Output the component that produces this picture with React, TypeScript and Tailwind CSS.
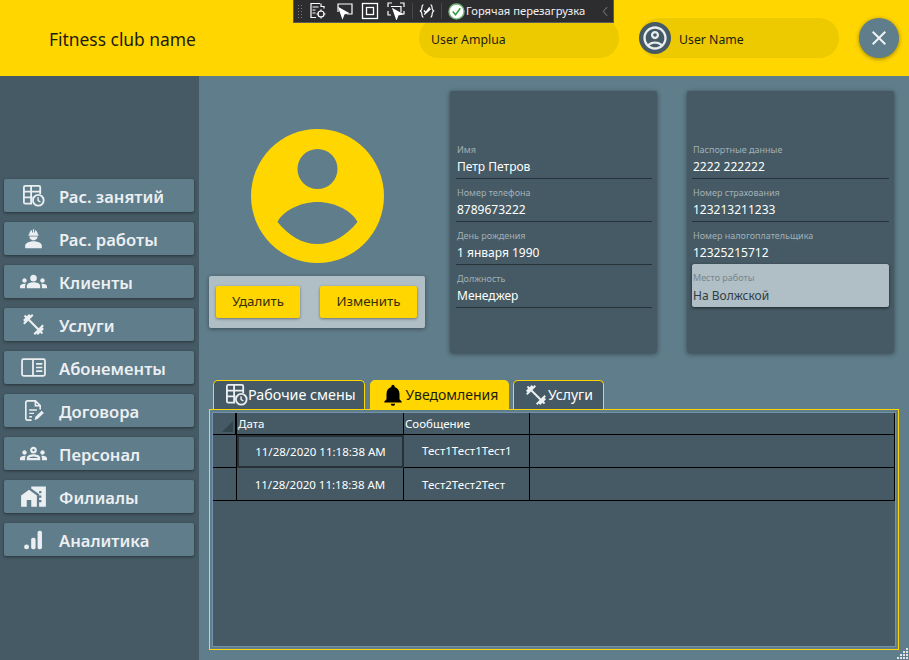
import React from "react";
import {
  MdGroups, MdFitnessCenter, MdOutlineGroups, MdMapsHomeWork,
  MdNotifications, MdOutlineAccountCircle, MdClose,
} from "react-icons/md";

const TableClock = ({ className = "" }: { className?: string }) => (
  <svg viewBox="0 0 24 24" className={className} fill="none" stroke="currentColor" strokeWidth="1.900">
    <path d="M10.500 20.500H3.500A1.500 1.500 0 0 1 2 19V3.500A1.500 1.500 0 0 1 3.500 2h14A1.500 1.500 0 0 1 19 3.500V10.500" />
    <path d="M2 8h17M2 14h9M9.500 2v18.500" />
    <circle cx="17" cy="17" r="5.600" />
    <path d="M16.800 13.800v3.500l2.400 1.300" strokeWidth="1.500" />
  </svg>
);

const HatPerson = ({ className = "" }: { className?: string }) => (
  <svg viewBox="0 0 24 24" className={className} fill="currentColor">
    <path d="M2.500 23v-3C2.500 17 8 15.200 12 15.200S21.500 17 21.500 20v3z" />
    <path d="M7.300 9.800c.1 2.900 2.200 4.400 4.700 4.400s4.600-1.500 4.700-4.400z" />
    <path d="M6.300 8.800V7.300h.8C7.300 4.600 8.700 2.900 10.300 2.300V5h1V1.500h1.400V5h1V2.300c1.600.6 3 2.300 3.200 5h.8v1.500z" />
  </svg>
);

const BookIcon = ({ className = "" }: { className?: string }) => (
  <svg viewBox="0 0 24 24" className={className} fill="none" stroke="currentColor" strokeWidth="1.700">
    <rect x="1" y="4" width="22" height="16" rx="1.500" />
    <path d="M11.500 4v16" />
    <path d="M14.500 8.500h6M14.500 12h6M14.500 15.500h6" strokeWidth="1.500" />
  </svg>
);

const ContractIcon = ({ className = "" }: { className?: string }) => (
  <svg viewBox="0 0 24 24" className={className} fill="none" stroke="currentColor" strokeWidth="1.700">
    <path d="M10 22H6a2 2 0 0 1-2-2V4a2 2 0 0 1 2-2h8l5 5v4" />
    <path d="M14 2v5h5" />
    <path d="M7.500 11.500h8M7.500 15h5M7.500 18.500h3" strokeWidth="1.500" />
    <path d="M13 22l1-3.500 6.500-6.200 2.300 2.300-6.500 6.300z" fill="currentColor" stroke="none" />
  </svg>
);

const BarsIcon = ({ className = "" }: { className?: string }) => (
  <svg viewBox="0 0 24 24" className={className} fill="currentColor">
    <circle cx="5" cy="19.500" r="2.700" />
    <rect x="10" y="9.500" width="4.800" height="12.700" rx="2" />
    <rect x="17" y="2" width="4.800" height="20.200" rx="2" />
  </svg>
);

const nav: { label: string; icon: React.ReactNode }[] = [
  { label: "Рас. занятий", icon: <TableClock className="w-[23px] h-[23px]" /> },
  { label: "Рас. работы", icon: <HatPerson className="w-[21px] h-[21px]" /> },
  { label: "Клиенты", icon: <MdGroups className="w-[27px] h-[27px]" /> },
  { label: "Услуги", icon: <MdFitnessCenter className="w-[25px] h-[25px]" /> },
  { label: "Абонементы", icon: <BookIcon className="w-[25px] h-[25px]" /> },
  { label: "Договора", icon: <ContractIcon className="w-[23px] h-[23px]" /> },
  { label: "Персонал", icon: <MdOutlineGroups className="w-[27px] h-[27px]" /> },
  { label: "Филиалы", icon: <MdMapsHomeWork className="w-[27px] h-[27px]" /> },
  { label: "Аналитика", icon: <BarsIcon className="w-[22px] h-[22px]" /> },
];

const Field = ({ label, value, active }: { label: string; value: string; active?: boolean }) => (
  <div
    className={
      "h-[43px] flex flex-col justify-end pl-[1px] " +
      (active
        ? "-mt-[1px] bg-[#B0BEC5] rounded-[2px] shadow-[0_1px_3px_rgba(0,0,0,0.6)] text-[#2f3d44]"
        : "border-b border-[#263238] text-white")
    }
  >
    <div className={"text-[9px] leading-[12px] " + (active ? "mb-[4px] text-[#78868d]" : "mb-[3px] text-[#a3b0b6]")}>{label}</div>
    <div className="text-[12px] leading-[16px] mb-[3px]">{value}</div>
  </div>
);

const Card = ({ rows, className }: { rows: { label: string; value: string; active?: boolean }[]; className: string }) => (
  <div className={"w-[207px] h-[262px] bg-[#455A64] rounded-[2px] shadow-[0_1px_5px_rgba(0,0,0,0.45)] pt-[45px] " + className}>
    {rows.map((r) => (
      <Field key={r.label} {...r} />
    ))}
  </div>
);

const Tab = ({ children, active, className }: { children: React.ReactNode; active?: boolean; className: string }) => (
  <div
    className={
      "h-[29px] rounded-t-[5px] border border-b-0 border-[#FFD600] flex items-center pb-[1px] " +
      (active ? "bg-[#FFD600] text-[#1c1c10]" : "bg-[#455A64] text-white") +
      " " + className
    }
  >
    {children}
  </div>
);

const Cell = ({ children, className = "border-r border-b border-black" }: { children?: React.ReactNode; className?: string }) => (
  <div className={"flex items-center text-white text-[11.500px] leading-none " + className}>{children}</div>
);

const Grip = () => (
  <div className="absolute right-[1px] bottom-[1px] grid grid-cols-4 gap-[1px] w-[11px] h-[11px]">
    {[0, 0, 0, 1, 0, 0, 1, 1, 0, 1, 1, 1, 1, 1, 1, 1].map((d, i) => (
      <div key={i} className={"w-[2px] h-[2px] " + (d ? "bg-[#dfe6ea]" : "")} />
    ))}
  </div>
);

const ToolBar = () => (
  <div className="absolute left-[293px] top-0 w-[321px] h-[23px] bg-[#2d2d30] border border-[#5a5a5e] border-t-0 flex items-center text-white z-10">
    <div className="w-[7px] h-[14px] ml-[3px] mr-[5px] bg-[radial-gradient(#777_1px,transparent_1px)] bg-[length:3px_3px]" />
    <svg viewBox="0 0 18 18" className="w-[18px] h-[18px] mr-[8px]" fill="none" stroke="#fff" strokeWidth="1.200">
      <path d="M11 1.500H2v14h5M3.500 5h6M3.500 8h3M3.500 11h3M12 1.500v3h3v2" />
      <circle cx="12" cy="12" r="3" />
      <path d="M12 7.500v2M12 14.500v2M7.500 12h2M14.500 12h2" />
    </svg>
    <svg viewBox="0 0 18 18" className="w-[18px] h-[18px] mr-[8px]" fill="none" stroke="#fff" strokeWidth="1.200">
      <path d="M3 10V2h14v10h-5" />
      <path d="M4 6l9 5-4 1-1.500 4z" fill="#fff" />
    </svg>
    <svg viewBox="0 0 18 18" className="w-[18px] h-[18px] mr-[8px]" fill="none" stroke="#fff" strokeWidth="1.300">
      <rect x="1.500" y="1.500" width="15" height="15" />
      <rect x="5.500" y="5.500" width="7" height="7" />
    </svg>
    <svg viewBox="0 0 18 18" className="w-[18px] h-[18px] mr-[7px]" fill="none" stroke="#fff" strokeWidth="1.200">
      <path d="M1 5V1h4M13 1h4v4M1 9v4h3M17 9v3h-3M4 4.500h10v6" />
      <path d="M6 7l9 5-4 1-1.500 4z" fill="#fff" />
    </svg>
    <div className="w-px h-[16px] bg-[#47474b] mr-[6px]" />
    <svg viewBox="0 0 18 18" className="w-[16px] h-[16px] mr-[6px]" fill="none" stroke="#fff" strokeWidth="1.300">
      <path d="M5 2C3 2 3.500 5 3 7c-.3 1-1.500 2-1.500 2S2.700 10 3 11c.5 2 0 5 2 5M13 2c2 0 1.500 3 2 5 .3 1 1.500 2 1.500 2s-1.200 1-1.500 2c-.5 2 0 5-2 5" />
      <path d="M6 13L12 5M5.500 8.500l2.500 2.500 5-4.500" strokeWidth="1.500" />
    </svg>
    <div className="w-px h-[16px] bg-[#47474b] mr-[6px]" />
    <svg viewBox="0 0 18 18" className="w-[17px] h-[17px] mr-[1px]" fill="none">
      <circle cx="9" cy="9" r="8" fill="#fff" stroke="#7cb87c" strokeWidth="1.500" />
      <path d="M5 9l3 3.500L13 5.500" stroke="#2f9e44" strokeWidth="1.600" />
    </svg>
    <span className="text-[11.200px] leading-none text-[#f1f1f1]">Горячая перезагрузка</span>
    <svg viewBox="0 0 8 12" className="ml-auto mr-[4px] w-[7px] h-[11px]" fill="none" stroke="#6a6a6e" strokeWidth="1.200">
      <path d="M6 1L1.500 6 6 11" />
    </svg>
  </div>
);

export default function App() {
  return (
    <div className="relative w-[909px] h-[660px] overflow-hidden bg-[#607D8B] font-['Noto_Sans',sans-serif] flex flex-col">
      <ToolBar />
      <header className="h-[76px] shrink-0 bg-[#FFD600] flex items-center pl-[49px]">
        <div className="w-[370px] pt-[2px] text-[17.400px] text-[#1c1c10]">Fitness club name</div>
        <div className="w-[200px] h-[40px] rounded-[20px] bg-[#EDCA00] flex items-center pl-[12px] pt-[4px] text-[12.300px] text-[#1c1c10]">User Amplua</div>
        <div className="ml-[20px] w-[200px] h-[40px] rounded-[20px] bg-[#EDCA00] flex items-center text-[12.300px] text-[#1c1c10]">
          <div className="w-[32px] h-[32px] rounded-full bg-[#455A64] flex items-center justify-center mr-[8px]">
            <MdOutlineAccountCircle className="w-[28px] h-[28px] text-[#e8edf0]" />
          </div>
          <span className="pt-[4px]">User Name</span>
        </div>
        <div className="ml-[20px] w-[40px] h-[40px] rounded-full bg-[#607D8B] flex items-center justify-center shadow-[0_1px_4px_rgba(0,0,0,0.4)]">
          <MdClose className="w-[24px] h-[24px] text-[#eef2f4]" />
        </div>
      </header>

      <div className="flex-1 flex min-h-0">
        <aside className="w-[199px] shrink-0 bg-[#455A64] pt-[103px] pl-[4px] flex flex-col gap-[10px]">
          {nav.map((n) => (
            <div key={n.label} className="w-[190px] h-[33px] rounded-[2px] bg-[#607D8B] shadow-[0_1px_3px_rgba(0,0,0,0.45)] flex items-center text-[#eceff1] font-semibold text-[16.600px]">
              <div className="w-[55px] pl-[3px] flex justify-center shrink-0">{n.icon}</div>
              <span className="pt-[3px]">{n.label}</span>
            </div>
          ))}
        </aside>

        <main className="flex-1 flex flex-col pt-[15px] pl-[10px]">
          <div className="flex h-[262px]">
            <div className="w-[216px] flex flex-col items-center pt-[38px]">
              <svg viewBox="0 0 133 134" className="w-[133px] h-[134px]">
                <path
                  fill="#FFD600"
                  fillRule="evenodd"
                  d="M66.500 0a66.500 67 0 1 0 0 134a66.500 67 0 1 0 0-134zM66.500 20a20 20 0 1 0 0 40a20 20 0 1 0 0-40zM26.500 93C31 83 48 73 66.500 73S102 83 106.500 93C95 107 82 115 66.500 115S38 107 26.500 93z"
                />
              </svg>
              <div className="mt-[13px] w-[216px] h-[52px] bg-[#B0BEC5] rounded-[2px] shadow-[0_1px_4px_rgba(0,0,0,0.4)] flex items-center pl-[7px]">
                <div className="w-[84px] h-[32px] rounded-[2px] bg-[#FFD600] shadow-[0_1px_3px_rgba(0,0,0,0.4)] flex items-center justify-center text-[13.300px] text-[#33300c]">Удалить</div>
                <div className="ml-[20px] w-[97px] h-[32px] rounded-[2px] bg-[#FFD600] shadow-[0_1px_3px_rgba(0,0,0,0.4)] flex items-center justify-center text-[13.300px] text-[#33300c]">Изменить</div>
              </div>
            </div>
            <Card
              className="ml-[25px] pl-[6px] pr-[5px]"
              rows={[
                { label: "Имя", value: "Петр Петров" },
                { label: "Номер телефона", value: "8789673222" },
                { label: "День рождения", value: "1 января 1990" },
                { label: "Должность", value: "Менеджер" },
              ]}
            />
            <Card
              className="ml-[30px] px-[5px]"
              rows={[
                { label: "Паспортные данные", value: "2222 222222" },
                { label: "Номер страхования", value: "123213211233" },
                { label: "Номер налогоплательщика", value: "12325215712" },
                { label: "Место работы", value: "На Волжской", active: true },
              ]}
            />
          </div>

          <div className="mt-[27px] ml-[4px] flex gap-[4.500px]">
            <Tab className="w-[152px] pl-[11px] text-[14.300px]">
              <TableClock className="w-[23px] h-[23px] text-[#eceff1]" />
              Рабочие смены
            </Tab>
            <Tab active className="w-[139px] pl-[9px] text-[14px]">
              <MdNotifications className="w-[26px] h-[26px] text-black" />
              Уведомления
            </Tab>
            <Tab className="w-[91px] pl-[10px] text-[14px]">
              <MdFitnessCenter className="w-[24px] h-[24px] text-[#eceff1]" />
              Услуги
            </Tab>
          </div>

          <div className="relative w-[690px] h-[241px] border border-[#FFD600] bg-[#607D8B] p-[2px]">
            <div className="w-full h-full bg-[#455A64] border border-[#7393ad]">
              <div className="grid grid-cols-[24px_167px_126px_365px] grid-rows-[22px_33px_33px] w-[682px]">
                <Cell className="relative border-r-2 border-b border-black">
                  <div className="absolute right-[2px] bottom-[2px] w-0 h-0 border-l-[11px] border-l-transparent border-b-[11px] border-b-[#33454d]" />
                </Cell>
                <Cell className="pl-[1px] pt-[1px] border-r border-b border-black">Дата</Cell>
                <Cell className="pl-[1px] pt-[1px] border-r border-b border-black">Сообщение</Cell>
                <Cell />
                <Cell />
                <Cell className="justify-center border-2 border-[#263238]">11/28/2020 11:18:38 AM</Cell>
                <Cell className="pl-[18px] border-r border-b border-black">Тест1Тест1Тест1</Cell>
                <Cell />
                <Cell />
                <Cell className="justify-center pt-[1px] border-r border-b border-black">11/28/2020 11:18:38 AM</Cell>
                <Cell className="pl-[18px] pt-[1px] border-r border-b border-black">Тест2Тест2Тест</Cell>
                <Cell />
              </div>
            </div>
          </div>
        </main>
      </div>
      <Grip />
    </div>
  );
}
